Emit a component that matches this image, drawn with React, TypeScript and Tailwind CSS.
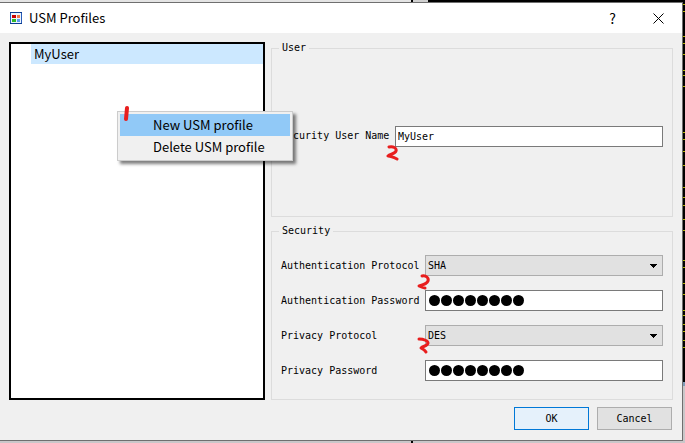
import { useState } from 'react'
import type { ReactNode } from 'react'

const mono = "font-['DejaVu_Sans_Mono','Liberation_Mono',monospace] text-[10px] leading-4"
const fieldBox = 'h-[21px] w-full min-w-0 rounded-none border px-[2px] outline-none'

// flecks of the terminal that shows past the window's right edge
const flecks = [2, 9, 34, 41, 52, 68, 73, 84, 130, 137, 149, 163, 185, 195, 203, 217, 228, 258, 265, 281, 292, 308, 313, 322, 329, 338, 345]

function AppIcon() {
  return (
    <svg width="12" height="12" viewBox="0 0 12 12" shapeRendering="crispEdges">
      <path fill="#2a5cb8" d="M0 0h12v12H0z" />
      <path fill="#0a3c90" d="M0 0h12v1H0zM0 11h12v1H0z" />
      <path fill="#eaf4ff" d="M1 1h10v10H1z" />
      <path fill="#c80000" d="M2 3h4v3H2z" />
      <path fill="#f07848" d="M7 3h3v3H7z" />
      <path fill="#30b828" d="M2 7h4v3H2z" />
      <path fill="#5a9cf0" d="M7 7h3v3H7z" />
    </svg>
  )
}

function Mark({ d, className }: { d: string; className: string }) {
  return (
    <svg className={`pointer-events-none absolute ${className}`} width="14" height="18" viewBox="0 0 14 18" fill="none" stroke="#e81e1e" strokeWidth="3" strokeLinecap="round" strokeLinejoin="round">
      <path d={d} />
    </svg>
  )
}

function Group({ title, className, children }: { title: string; className: string; children: ReactNode }) {
  return (
    <fieldset className={`relative min-w-0 border border-[#dcdcdc] px-[9px] ${className}`}>
      <legend className="-ml-[2px] h-3 px-[3px] leading-3">{title}</legend>
      {children}
    </fieldset>
  )
}

function Row({ label, id, children }: { label: string; id: string; children: ReactNode }) {
  return (
    <div className="flex h-[21px] items-center">
      <label htmlFor={id} className="w-36 shrink-0 whitespace-nowrap">{label}</label>
      <div className="relative min-w-0 flex-1">{children}</div>
    </div>
  )
}

function ProtocolSelect({ id, options }: { id: string; options: string[] }) {
  return (
    <>
      <select id={id} className={`${fieldBox} block appearance-none border-[#adadad] bg-[#e1e1e1]`}>
        {options.map((o) => <option key={o}>{o}</option>)}
      </select>
      <svg className="pointer-events-none absolute right-[6px] top-[9px]" width="7" height="4" viewBox="0 0 7 4" shapeRendering="crispEdges">
        <path d="M0 0h7v1H0zM1 1h5v1H1zM2 2h3v1H2zM3 3h1v1H3z" />
      </svg>
    </>
  )
}

function PasswordInput({ id }: { id: string }) {
  const [value, setValue] = useState('password')
  return (
    <div className="relative">
      <input id={id} type="password" value={value} onChange={(e) => setValue(e.target.value)} className={`${fieldBox} block border-[#7a7a7a] bg-white text-transparent caret-black`} />
      <div className="pointer-events-none absolute left-[4px] top-[5px] flex gap-px">
        {Array.from(value, (_, i) => <span key={i} className="size-[11px] rounded-full bg-black" />)}
      </div>
    </div>
  )
}

export default function App() {
  const [userName, setUserName] = useState('MyUser')

  return (
    <div className="relative flex h-screen flex-col overflow-hidden bg-[#c9c7c9] font-['Noto_Sans_CJK_SC','Noto_Sans',sans-serif] text-[13px] text-black">
      <div className="flex h-[2px] shrink-0">
        <div className="w-[411px] bg-[#e4e4e4]" />
        <div className="w-[2px] bg-black" />
        <div className="w-[15px] bg-[#d0d0d0]" />
        <div className="flex-1 bg-black" />
      </div>

      <div className="flex min-h-0 flex-1">
        <div className="flex min-w-0 flex-1 flex-col border-y border-r border-[#6f6f6f] bg-[#f0f0f0]">
          <header className="flex h-[30px] shrink-0 items-center bg-white pl-[10px] pr-[18px]">
            <AppIcon />
            <h1 className="ml-[7px] flex-1 leading-5">USM Profiles</h1>
            <button aria-label="Help" className="mr-[37px] text-[14px] leading-5">?</button>
            <button aria-label="Close">
              <svg width="11" height="11" viewBox="0 0 11 11" fill="none" stroke="black">
                <path d="M.5.5l10 10M10.5.5l-10 10" />
              </svg>
            </button>
          </header>

          <main className="flex min-h-0 flex-1 gap-[6px] px-[9px] pt-[9px]">
            <div className="w-64 shrink-0 border-2 border-black bg-white pl-5">
              <div className="h-5 bg-[#cce8ff] pl-[3px] leading-5">MyUser</div>
            </div>

            <div className={`flex min-w-0 flex-1 flex-col gap-2 ${mono}`}>
              <Group title="User" className="flex-1">
                <div className="flex h-full items-center pt-[2px]">
                  <label htmlFor="user-name" className="w-[114px] shrink-0 whitespace-nowrap">Security User Name</label>
                  <div className="relative min-w-0 flex-1">
                    <input id="user-name" value={userName} onChange={(e) => setUserName(e.target.value)} className={`${fieldBox} block border-[#7a7a7a] bg-white`} />
                    <Mark d="M3 3C7 2 11 4 10 7C9 10 4 10 2 12C4 12 7 13 11 15" className="-left-[9px] top-[18px]" />
                  </div>
                </div>
              </Group>

              <Group title="Security" className="pb-[18px]">
                <div className="flex flex-col gap-[14px] pt-[18px]">
                  <Row label="Authentication Protocol" id="auth-protocol">
                    <ProtocolSelect id="auth-protocol" options={['SHA', 'MD5']} />
                    <Mark d="M5 3C9 2 12 5 11 8C10 11 6 12 2 13C4 14 6 15 8 15" className="-left-[8px] top-[18px]" />
                  </Row>
                  <Row label="Authentication Password" id="auth-password">
                    <PasswordInput id="auth-password" />
                  </Row>
                  <Row label="Privacy Protocol" id="priv-protocol">
                    <ProtocolSelect id="priv-protocol" options={['DES', 'AES']} />
                    <Mark d="M2 2C7 2 11 4 11 6C11 9 6 9 4 11C6 12 8 13 9 15" className="-left-[8px] top-[12px]" />
                  </Row>
                  <Row label="Privacy Password" id="priv-password">
                    <PasswordInput id="priv-password" />
                  </Row>
                </div>
              </Group>
            </div>
          </main>

          <footer className={`flex h-10 shrink-0 items-center justify-end gap-2 pb-[3px] pr-[10px] ${mono}`}>
            <button className="h-[23px] w-[75px] border border-[#0078d7] bg-[#e5f1fb]">OK</button>
            <button className="h-[23px] w-[75px] border border-[#adadad] bg-[#e1e1e1]">Cancel</button>
          </footer>
        </div>

        <div className="relative w-[2px] shrink-0">
          <div className="h-[380px] bg-black" />
          <div className="h-1 bg-[#7f9db9]" />
          {flecks.map((y) => <i key={y} className="absolute left-0 h-px w-full bg-[#b5b500]" style={{ top: y }} />)}
        </div>
      </div>

      <div className="flex h-[2px] shrink-0">
        <div className="w-[411px]" />
        <div className="w-[2px] bg-black" />
        <div className="flex-1" />
      </div>

      <div role="menu" className="absolute left-[117px] top-[111px] w-[176px] border border-[#cccccc] bg-[#f0f0f0] p-[2px] shadow-[3px_3px_3px_rgba(0,0,0,0.5)]">
        <button role="menuitem" className="block h-[22px] w-full bg-[#91c9f7] pl-[33px] text-left leading-[22px]">New USM profile</button>
        <button role="menuitem" className="block h-[22px] w-full pl-[33px] text-left leading-[22px]">Delete USM profile</button>
      </div>
      <svg className="pointer-events-none absolute left-[124px] top-[105px]" width="6" height="17" viewBox="0 0 6 17" stroke="#e81e1e" strokeWidth="4" strokeLinecap="round">
        <path d="M3 3L2 14" />
      </svg>
    </div>
  )
}
